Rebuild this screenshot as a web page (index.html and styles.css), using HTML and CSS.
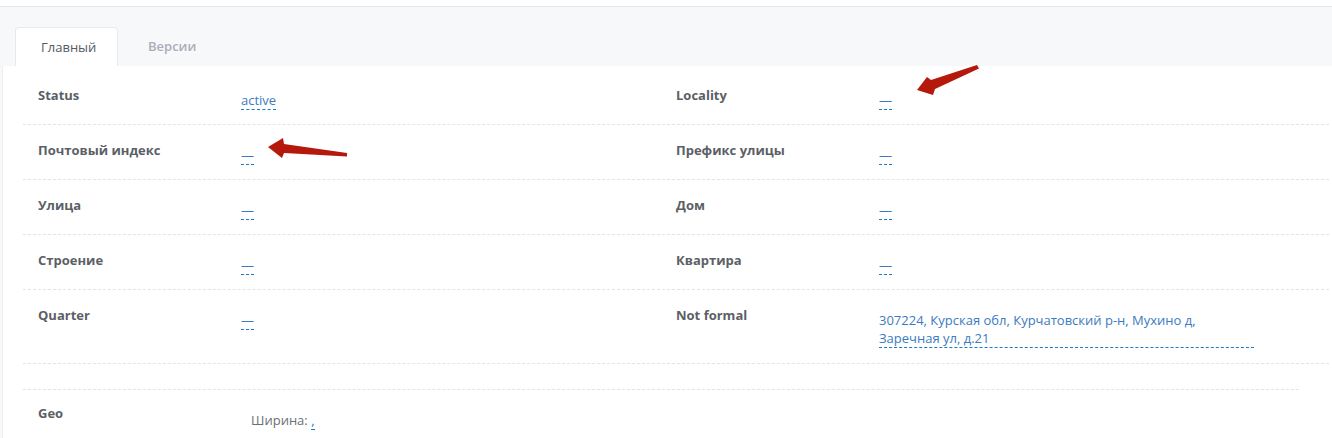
FILE: index.html
```html
<!DOCTYPE html>
<html lang="ru">
<head>
<meta charset="utf-8">
<title>Адрес</title>
<link rel="stylesheet" href="styles.css">
</head>
<body>
<div class="page">
  <div class="tabs">
    <div class="tab tab-active">Главный</div>
    <div class="tab tab-inactive">Версии</div>
  </div>
  <div class="panel">
    <div class="row">
      <div class="cell"><div class="label">Status</div><div class="value"><span class="link">active</span></div></div>
      <div class="cell"><div class="label">Locality</div><div class="value"><span class="link">—</span></div></div>
    </div>
    <div class="row">
      <div class="cell"><div class="label">Почтовый индекс</div><div class="value"><span class="link">—</span></div></div>
      <div class="cell"><div class="label">Префикс улицы</div><div class="value"><span class="link">—</span></div></div>
    </div>
    <div class="row">
      <div class="cell"><div class="label">Улица</div><div class="value"><span class="link">—</span></div></div>
      <div class="cell"><div class="label">Дом</div><div class="value"><span class="link">—</span></div></div>
    </div>
    <div class="row">
      <div class="cell"><div class="label">Строение</div><div class="value"><span class="link">—</span></div></div>
      <div class="cell"><div class="label">Квартира</div><div class="value"><span class="link">—</span></div></div>
    </div>
    <div class="row">
      <div class="cell"><div class="label">Quarter</div><div class="value"><span class="link">—</span></div></div>
      <div class="cell"><div class="label">Not formal</div><div class="value"><span class="link link-block">307224, Курская обл, Курчатовский р-н, Мухино д, Заречная ул, д.21</span></div></div>
    </div>
    <div class="spacer"></div>
    <div class="geo">
      <div class="label">Geo</div>
      <div class="geo-value">Ширина: <span class="link">,</span></div>
    </div>
  </div>
</div>
<svg class="arrows" width="1332" height="438" viewBox="0 0 1332 438" xmlns="http://www.w3.org/2000/svg">
  <polygon points="268,147 283,138 284,144 347,153 347,156.5 284,153 282,158" fill="#b5190b"/>
  <polygon points="917,90 927,77 931,80 977,65 979,68.5 935,89 933,95" fill="#b5190b"/>
</svg>
</body>
</html>
```
FILE: styles.css
```css
html, body {
  margin: 0;
  padding: 0;
  background: #ffffff;
}
body {
  position: relative;
  width: 1332px;
  height: 438px;
  overflow: hidden;
  font-family: "Open Sans", "Liberation Sans", sans-serif;
  font-size: 13px;
  color: #5c5f66;
}
.page {
  margin-top: 6px;
  border-top: 1px solid #e6e7e9;
  background: #f7f8fa;
}
.tabs {
  display: flex;
  padding: 20px 0 0 15px;
  height: 39px;
}
.tab {
  height: 39px;
  line-height: 39px;
  padding: 0 25px;
  box-sizing: border-box;
}
.tab-active {
  width: 103px;
  background: #ffffff;
  border: 1px solid #e8e9ec;
  border-bottom: none;
  border-radius: 4px 4px 0 0;
  color: #555a61;
}
.tab-inactive {
  margin-left: 4px;
  padding-left: 26px;
  color: #a9aeb7;
  font-weight: 600;
}
.panel {
  margin-left: 2px;
  border-left: 1px solid #eceef1;
  background: #ffffff;
  padding: 4px 3px 0 20px;
  height: 368px;
}
.row {
  display: grid;
  grid-template-columns: 638px 1fr;
  border-bottom: 1px dashed #e3e4e6;
}
.cell {
  display: grid;
  grid-template-columns: 203px 1fr;
  padding: 16px 0 15px 15px;
  align-items: start;
}
.label {
  font-weight: 700;
  line-height: 18px;
  color: #5c5f66;
}
.value {
  margin-top: 5px;
  line-height: 18px;
}
.link {
  color: #3c7bbf;
  border-bottom: 1px dashed #1a7cc9;
}
.link-block {
  display: block;
  width: 375px;
}
.spacer {
  height: 25px;
  border-bottom: 1px dashed #e3e4e6;
  margin-right: 30px;
}
.geo {
  display: grid;
  grid-template-columns: 213px 1fr;
  padding: 14px 0 0 15px;
}
.geo-value {
  margin-top: 7px;
  line-height: 18px;
  color: #6b6f76;
}
.arrows {
  position: absolute;
  top: 0;
  left: 0;
  pointer-events: none;
}
```
